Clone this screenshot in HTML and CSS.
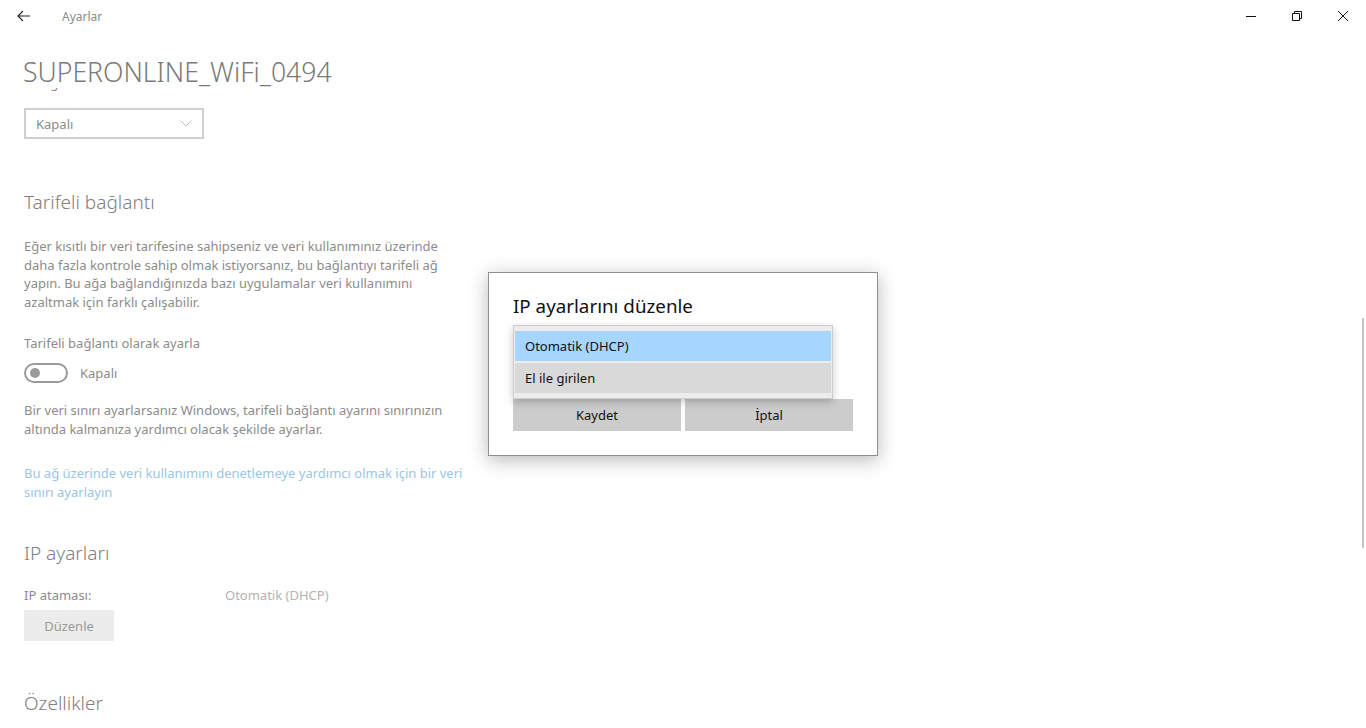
FILE: index.html
```html
<!DOCTYPE html>
<html lang="tr">
<head>
<meta charset="utf-8">
<title>Ayarlar</title>
<link rel="stylesheet" href="styles.css">
</head>
<body>
<div class="app">
  <div class="titlebar">
    <div class="tb-back">
      <svg width="14" height="12" viewBox="0 0 14 12"><path d="M6 1 L1 6 L6 11 M1 6 H13" fill="none" stroke="#222" stroke-width="1.1"/></svg>
    </div>
    <div class="tb-title">Ayarlar</div>
    <div class="tb-controls">
      <div class="tb-btn"><svg width="10" height="10" viewBox="0 0 10 10"><path d="M0 5.5 H10" stroke="#111" stroke-width="1"/></svg></div>
      <div class="tb-btn"><svg width="10" height="10" viewBox="0 0 10 10"><path d="M0.5 2.5 H7.5 V9.5 H0.5 Z M2.5 2.5 V0.5 H9.5 V7.5 H7.5" fill="none" stroke="#111" stroke-width="1"/></svg></div>
      <div class="tb-btn"><svg width="10" height="10" viewBox="0 0 10 10"><path d="M0 0 L10 10 M10 0 L0 10" stroke="#111" stroke-width="1"/></svg></div>
    </div>
  </div>
  <div class="header">
    <h1 class="page-title">SUPERONLINE_WiFi_0494</h1>
  </div>
  <div class="scroll">
    <div class="scroll-inner">
      <div class="label clipped">Rastgele donanım adreslerini kullanın</div>
      <div class="combo">
        <span>Kapalı</span>
        <svg width="12" height="7" viewBox="0 0 12 7"><path d="M0.5 0.5 L6 6 L11.5 0.5" fill="none" stroke="#bbb" stroke-width="1"/></svg>
      </div>

      <h2 class="section first">Tarifeli bağlantı</h2>
      <p class="text p1">Eğer kısıtlı bir veri tarifesine sahipseniz ve veri kullanımınız üzerinde daha fazla kontrole sahip olmak istiyorsanız, bu bağlantıyı tarifeli ağ yapın. Bu ağa bağlandığınızda bazı uygulamalar veri kullanımını azaltmak için farklı çalışabilir.</p>
      <div class="label l2">Tarifeli bağlantı olarak ayarla</div>
      <div class="toggle-row">
        <div class="toggle"><div class="knob"></div></div>
        <span class="toggle-label">Kapalı</span>
      </div>
      <p class="text p2">Bir veri sınırı ayarlarsanız Windows, tarifeli bağlantı ayarını sınırınızın altında kalmanıza yardımcı olacak şekilde ayarlar.</p>
      <p class="text link">Bu ağ üzerinde veri kullanımını denetlemeye yardımcı olmak için bir veri sınırı ayarlayın</p>

      <h2 class="section ip">IP ayarları</h2>
      <div class="kv">
        <span class="k">IP ataması:</span>
        <span class="v">Otomatik (DHCP)</span>
      </div>
      <div class="btn-gray">Düzenle</div>

      <h2 class="section props">Özellikler</h2>
    </div>
    <div class="scrollbar"></div>
  </div>
</div>

<div class="dialog">
  <div class="dlg-title">IP ayarlarını düzenle</div>
  <div class="dlg-spacer"></div>
  <div class="dlg-buttons">
    <div class="dlg-btn">Kaydet</div>
    <div class="dlg-btn">İptal</div>
  </div>
  <div class="popup">
    <div class="item selected">Otomatik (DHCP)</div>
    <div class="item hover">El ile girilen</div>
  </div>
</div>
</body>
</html>
```

FILE: styles.css
```css
* { box-sizing: border-box; }
html, body {
  margin: 0;
  width: 1366px;
  height: 728px;
  overflow: hidden;
  background: #fff;
  font-family: "Noto Sans", "Open Sans", sans-serif;
}
.app {
  display: flex;
  flex-direction: column;
  height: 728px;
}
.titlebar {
  height: 32px;
  display: flex;
  align-items: center;
  flex: none;
}
.tb-back {
  width: 48px;
  height: 32px;
  display: flex;
  align-items: center;
  justify-content: center;
}
.tb-title {
  margin-left: 14px;
  font-size: 12px;
  color: #8a8a8a;
}
.tb-controls {
  margin-left: auto;
  display: flex;
}
.tb-btn {
  width: 46px;
  height: 32px;
  display: flex;
  align-items: center;
  justify-content: center;
}
.header {
  height: 56px;
  flex: none;
  padding: 24px 0 0 23px;
  position: relative;
  z-index: 1;
  background: #fff;
}
.page-title {
  margin: 0;
  font-size: 26.6px;
  font-weight: 300;
  line-height: 32px;
  color: #7a7a7a;
}
.scroll {
  flex: 1;
  position: relative;
  overflow: hidden;
}
.scroll-inner {
  margin-top: -14px;
  padding-left: 24px;
}
.label {
  font-size: 13px;
  line-height: 18px;
  color: #8c8c8c;
}
.combo {
  margin-top: 16px;
  width: 180px;
  height: 31px;
  border: 2px solid #cfcfcf;
  display: flex;
  align-items: center;
  justify-content: space-between;
  padding: 0 10px 0 10px;
  font-size: 13px;
  line-height: 18px;
  color: #8c8c8c;
}
.section {
  margin: 0;
  font-size: 19px;
  font-weight: 300;
  line-height: 28px;
  color: #808080;
}
.section.first { margin-top: 49px; }
.section.ip { margin-top: 38px; }
.section.props { margin-top: 48px; }
.text {
  margin: 0;
  font-size: 13px;
  line-height: 18.5px;
  color: #8c8c8c;
  width: 445px;
}
.p1 { margin-top: 21px; }
.l2 { margin-top: 23px; }
.toggle-row {
  margin-top: 11px;
  display: flex;
  align-items: center;
  height: 20px;
}
.toggle {
  width: 44px;
  height: 20px;
  border: 2px solid #9a9a9a;
  border-radius: 10px;
  display: flex;
  align-items: center;
  padding-left: 4px;
}
.knob {
  width: 10px;
  height: 10px;
  border-radius: 50%;
  background: #9a9a9a;
}
.toggle-label {
  margin-left: 12px;
  font-size: 13px;
  color: #8c8c8c;
}
.p2 { margin-top: 18px; }
.link {
  margin-top: 26px;
  color: #9ac5e6;
}
.kv {
  margin-top: 19px;
  display: flex;
  font-size: 13px;
  line-height: 18px;
}
.k { width: 201px; color: #8c8c8c; }
.v { color: #b2b2b2; }
.btn-gray {
  margin-top: 6px;
  width: 90px;
  height: 31px;
  background: #ececec;
  display: flex;
  align-items: center;
  justify-content: center;
  font-size: 13px;
  color: #9a9a9a;
}
.scrollbar {
  position: absolute;
  right: 2px;
  top: 230px;
  width: 2px;
  height: 230px;
  background: #c4c4c4;
}

/* dialog overlay */
.dialog {
  position: absolute;
  left: 488px;
  top: 272px;
  width: 390px;
  height: 184px;
  background: #fff;
  border: 1px solid #8f8f8f;
  box-shadow: 0 4px 18px rgba(0,0,0,0.28);
  padding: 0 24px 0 24px;
  display: flex;
  flex-direction: column;
}
.dlg-title {
  margin-top: 19px;
  font-size: 18.8px;
  line-height: 28px;
  color: #111;
}
.dlg-spacer { height: 79px; }
.dlg-buttons {
  display: flex;
  gap: 4px;
}
.dlg-btn {
  flex: 1;
  height: 32px;
  background: #cccccc;
  display: flex;
  align-items: center;
  justify-content: center;
  font-size: 13px;
  color: #111;
}
.popup {
  position: absolute;
  left: 24px;
  top: 52px;
  width: 320px;
  height: 74px;
  background: #ececec;
  border: 1px solid #cdcdcd;
  box-shadow: 0 3px 8px rgba(0,0,0,0.22);
  padding: 5px 1px 4px 1px;
  display: flex;
  flex-direction: column;
  gap: 2px;
}
.item {
  height: 30px;
  display: flex;
  align-items: center;
  padding-left: 10px;
  font-size: 13px;
  color: #111;
}
.item.selected { background: #a6d6fd; }
.item.hover { background: #d9d9d9; }
```
